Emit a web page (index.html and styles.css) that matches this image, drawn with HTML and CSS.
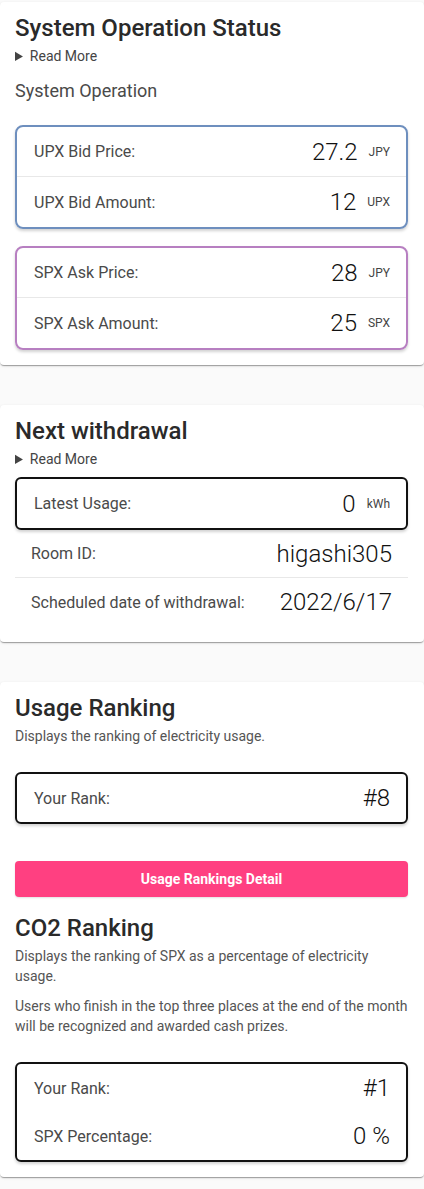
FILE: index.html
```html
<!DOCTYPE html>
<html lang="en">
<head>
<meta charset="utf-8">
<title>Dashboard</title>
<link rel="stylesheet" href="styles.css">
</head>
<body>
<main class="page">
  <section class="card">
    <h2 class="card-title">System Operation Status</h2>
    <details class="more"><summary>Read More</summary></details>
    <h3 class="subhead">System Operation</h3>
    <div class="box box-blue">
      <div class="row row-tall divided"><span class="label">UPX Bid Price:</span><span class="value">27.2<span class="unit">JPY</span></span></div>
      <div class="row row-tall"><span class="label">UPX Bid Amount:</span><span class="value">12<span class="unit">UPX</span></span></div>
    </div>
    <div class="box box-purple">
      <div class="row row-tall divided"><span class="label">SPX Ask Price:</span><span class="value">28<span class="unit">JPY</span></span></div>
      <div class="row row-tall"><span class="label">SPX Ask Amount:</span><span class="value">25<span class="unit">SPX</span></span></div>
    </div>
  </section>

  <section class="card card-withdrawal">
    <h2 class="card-title">Next withdrawal</h2>
    <details class="more more-tight"><summary>Read More</summary></details>
    <div class="box box-black box-flush">
      <div class="row row-usage"><span class="label">Latest Usage:</span><span class="value">0<span class="unit">kWh</span></span></div>
    </div>
    <div class="plain">
      <div class="row divided"><span class="label">Room ID:</span><span class="value">higashi305</span></div>
      <div class="row"><span class="label">Scheduled date of withdrawal:</span><span class="value">2022/6/17</span></div>
    </div>
  </section>

  <section class="card">
    <h2 class="card-title">Usage Ranking</h2>
    <p class="desc">Displays the ranking of electricity usage.</p>
    <div class="box box-black box-rank">
      <div class="row"><span class="label">Your Rank:</span><span class="value">#8</span></div>
    </div>
    <button class="btn" type="button">Usage Rankings Detail</button>
    <h2 class="card-title title-second">CO2 Ranking</h2>
    <p class="desc">Displays the ranking of SPX as a percentage of electricity usage.</p>
    <p class="desc">Users who finish in the top three places at the end of the month will be recognized and awarded cash prizes.</p>
    <div class="box box-black box-rank">
      <div class="row"><span class="label">Your Rank:</span><span class="value">#1</span></div>
      <div class="row"><span class="label">SPX Percentage:</span><span class="value">0 %</span></div>
    </div>
  </section>
</main>
</body>
</html>
```

FILE: styles.css
```css
* { box-sizing: border-box; }

body {
  margin: 0;
  background: #fafafa;
  font-family: Roboto, "Noto Sans", "Liberation Sans", sans-serif;
  color: rgba(0, 0, 0, 0.87);
}

.page {
  padding-top: 2px;
}

.card {
  background: #fff;
  border-radius: 4px;
  box-shadow: 0 2px 1px -1px rgba(0,0,0,.2), 0 1px 1px 0 rgba(0,0,0,.14), 0 1px 3px 0 rgba(0,0,0,.12);
  padding: 10px 16px 15px 15px;
  margin-bottom: 40px;
}

.card-withdrawal {
  padding-bottom: 16px;
}

.card-title {
  margin: 0 0 2px;
  font-size: 24px;
  font-weight: 500;
  line-height: 32px;
  color: #2a2a2a;
}

.title-second {
  margin-top: 15px;
}

.more {
  font-size: 14px;
  line-height: 20px;
  color: #444;
}

.more summary {
  cursor: pointer;
}

.more-tight {
  margin-bottom: 8px;
}

.subhead {
  margin: 13px 0 22px;
  font-size: 18px;
  font-weight: 400;
  line-height: 24px;
  color: #4a4a4a;
}

.desc {
  margin: 0 0 10px;
  font-size: 14px;
  line-height: 20px;
  color: #555;
}

.box {
  border: 2px solid #111;
  border-radius: 8px;
  box-shadow: 0 2px 3px rgba(0,0,0,.18);
  margin-bottom: 17px;
}

.box:last-child,
.box-flush {
  margin-bottom: 0;
}

.box-blue { border-color: #6e8fbe; }
.box-purple { border-color: #b77fc1; }
.box-black { border-color: #111; border-radius: 6px; }

.box-rank {
  margin-top: 26px;
}

.row {
  display: flex;
  align-items: center;
  justify-content: space-between;
  height: 48px;
  padding: 0 16px 0 17px;
}

.row-tall {
  height: 50px;
}

.row-usage {
  height: 49px;
}

.divided {
  border-bottom: 1px solid #e8e8e8;
}

.plain .row {
  padding: 0 16px;
}

.label {
  font-size: 16px;
  font-weight: 400;
  color: #4a4a4a;
}

.value {
  font-size: 24px;
  font-weight: 300;
  color: #111;
  display: flex;
  align-items: center;
}

.unit {
  font-size: 12px;
  font-weight: 400;
  color: #444;
  margin-left: 11px;
}

.btn {
  display: block;
  width: 100%;
  height: 36px;
  margin-top: 37px;
  border: none;
  border-radius: 4px;
  background: #ff4081;
  color: #fff;
  font-family: Roboto, "Noto Sans", sans-serif;
  font-size: 14px;
  font-weight: 700;
  box-shadow: 0 1px 2px rgba(0,0,0,.12);
}
```
